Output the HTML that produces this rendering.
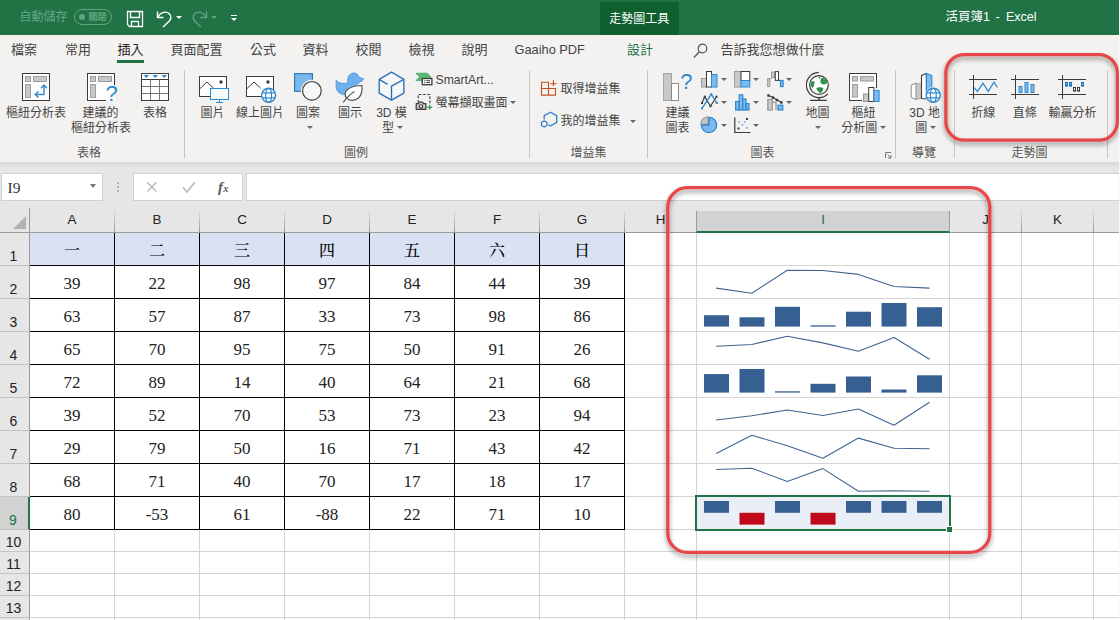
<!DOCTYPE html><html lang="zh-Hant"><head><meta charset="utf-8"><title>Excel</title><style>
*{box-sizing:border-box;margin:0;padding:0}
html,body{width:1120px;height:620px;overflow:hidden;background:#fff}
body{position:relative;font-family:"Liberation Sans","Noto Sans CJK TC",sans-serif;font-size:12px;color:#444}
.abs{position:absolute}
#title{position:absolute;left:0;top:0;width:1120px;height:35px;background:#217346}
#tabs{position:absolute;left:0;top:35px;width:1120px;height:29px;background:#f3f2f1}
#ribbon{position:absolute;left:0;top:64px;width:1120px;height:98px;background:#f3f2f1}
#fbar{position:absolute;left:0;top:162px;width:1120px;height:46px;background:#e6e6e6}
#grid{position:absolute;left:0;top:208px;width:1120px;height:412px;background:#fff;overflow:hidden}
.tab{position:absolute;top:42px;font-size:13px;line-height:16px;color:#444;white-space:nowrap}
.lbl{position:absolute;font-size:12px;line-height:14px;color:#444;white-space:nowrap;text-align:center}
.glbl{position:absolute;top:146px;font-size:12px;line-height:14px;color:#555;white-space:nowrap}
.vsep{position:absolute;top:70px;width:1px;height:88px;background:#c8c6c4}
.ch{position:absolute;top:0;height:24px;background:#e6e6e6;font-size:13.4px;line-height:18px;padding-top:3px;text-align:center;color:#222;font-family:"Liberation Sans",sans-serif}
.rh{position:absolute;left:0;width:30px;z-index:4;background:#e6e6e6;border-bottom:1px solid #c4c4c4;border-right:1px solid #9b9b9b;font-size:14px;text-align:center;padding-right:2px;color:#222;font-family:"Liberation Sans",sans-serif}
.hl{position:absolute;left:29px;width:1091px;height:1px;background:#d4d4d4}
.vl{position:absolute;top:24px;width:1px;height:400px;background:#d4d4d4}
.c{position:absolute;width:86px;height:34px;border:1px solid #000;text-align:center;font-family:"Liberation Serif","Noto Serif CJK SC",serif;font-size:17px;line-height:32px;padding-top:2px;color:#222}
.c.h{font-size:16px;padding-top:2px;font-weight:500;color:#000}
.c.h{background:#d9e1f2}
</style></head><body>
<div id="title">
<span class="abs" style="left:19.5px;top:9px;font-size:12px;line-height:16px;color:#62a882;white-space:nowrap">自動儲存</span>
<span class="abs" style="left:74px;top:9px;width:38px;height:16px;border:1px solid #5fa57f;border-radius:8px"></span>
<span class="abs" style="left:79px;top:14px;width:6px;height:6px;border-radius:3px;background:#5fa57f"></span>
<span class="abs" style="left:88.5px;top:10px;font-size:9px;line-height:14px;font-weight:bold;color:#62a882;white-space:nowrap">關閉</span>
<div class="abs" style="left:600px;top:2px;width:79px;height:33px;background:#10602f"></div>
<span class="abs" style="left:609.3px;top:10.5px;font-size:12px;line-height:16px;color:#fff;white-space:nowrap">走勢圖工具</span>
<span class="abs" style="left:945.5px;top:9px;font-size:12.5px;line-height:16px;color:#fff;white-space:pre">活頁簿1</span>
<span class="abs" style="left:995.5px;top:9px;font-size:12.5px;line-height:16px;color:#fff;white-space:pre">-</span>
<span class="abs" style="left:1006px;top:9px;font-size:12.5px;line-height:16px;color:#fff;white-space:pre">Excel</span>
<svg class="abs" style="left:126px;top:10px" width="18" height="18" viewBox="0 0 18 18"><path d="M1.5 1.5 H16.5 V16.5 H3.5 L1.5 14.5 Z M4.5 1.5 V7.5 H13.5 V1.5 M5.5 16.5 V11.5 H12.5 V16.5" fill="none" stroke="#fff" stroke-width="1.3"/></svg>
<svg class="abs" style="left:156px;top:10px" width="18" height="18" viewBox="0 0 18 18"><path d="M1.5 1.5 V7.5 H7.5" fill="none" stroke="#fff" stroke-width="1.4"/><path d="M1.8 7.2 C4 3.5 8 1.2 11.5 2.6 C15 4 15.8 8 13.6 10.8 L7 17" fill="none" stroke="#fff" stroke-width="1.4"/></svg>
<div class="abs" style="left:175.5px;top:16px;width:0;height:0;border-left:3px solid transparent;border-right:3px solid transparent;border-top:3px solid #fff"></div>
<svg class="abs" style="left:190px;top:10px" width="18" height="18" viewBox="0 0 18 18"><path d="M16.5 1.5 V7.5 H10.5" fill="none" stroke="#5fa57f" stroke-width="1.3"/><path d="M16.2 7.2 C14 3.5 10 1.2 6.5 2.6 C3 4 2.2 8 4.4 10.8 L11 17" fill="none" stroke="#5fa57f" stroke-width="1.3"/></svg>
<div class="abs" style="left:210.5px;top:16px;width:0;height:0;border-left:3px solid transparent;border-right:3px solid transparent;border-top:3px solid #5fa57f"></div>
<div class="abs" style="left:231px;top:15px;width:6px;height:1px;background:#fff"></div>
<div class="abs" style="left:230.5px;top:18px;width:0;height:0;border-left:3px solid transparent;border-right:3px solid transparent;border-top:3px solid #fff"></div>
</div>
<div id="tabs"></div>
<span class="tab" style="left:11px">檔案</span>
<span class="tab" style="left:65px">常用</span>
<span class="tab" style="left:117.5px;color:#222">插入</span>
<span class="tab" style="left:170.5px">頁面配置</span>
<span class="tab" style="left:250px">公式</span>
<span class="tab" style="left:302.5px">資料</span>
<span class="tab" style="left:355.5px">校閱</span>
<span class="tab" style="left:408.5px">檢視</span>
<span class="tab" style="left:461.5px">說明</span>
<span class="tab" style="left:514.5px;font-size:12.8px">Gaaiho PDF</span>
<span class="tab" style="left:627px;color:#217346">設計</span>
<div class="abs" style="left:117px;top:60px;width:27px;height:3px;background:#217346"></div>
<span class="tab" style="left:720.5px">告訴我您想做什麼</span>
<svg class="abs" style="left:692px;top:42px" width="18" height="18" viewBox="0 0 18 18"><circle cx="10.5" cy="6.5" r="4.3" fill="none" stroke="#555" stroke-width="1.2"/><path d="M7.4 9.8 L2 15.5" stroke="#555" stroke-width="1.3" fill="none"/></svg>
<div id="ribbon"></div>
<svg class="abs" style="left:22px;top:73px" width="28" height="28" viewBox="0 0 28 28"><rect x="0.5" y="0.5" width="27" height="27" fill="#fff" stroke="#3b3b3b"/><rect x="3.5" y="3.5" width="5" height="5" fill="#c8c8c8" stroke="#9d9d9d"/><rect x="11.5" y="3.5" width="13" height="5" fill="#c8c8c8" stroke="#9d9d9d"/><rect x="3.5" y="11.5" width="5" height="13" fill="#c8c8c8" stroke="#9d9d9d"/><path d="M22 12.5 V21.5 H13.5 M19 15.2 L22 12 L25 15.2 M16.5 18.5 L13.2 21.5 L16.5 24.5" fill="none" stroke="#2e8ad0" stroke-width="1.4"/></svg>
<span class="lbl" style="left:-24px;width:120px;top:106px">樞紐分析表</span>
<svg class="abs" style="left:87px;top:73px" width="32" height="32" viewBox="0 0 32 32"><rect x="0.5" y="0.5" width="27" height="27" fill="#fff" stroke="#3b3b3b"/><rect x="3.5" y="3.5" width="5" height="5" fill="#c8c8c8" stroke="#9d9d9d"/><rect x="11.5" y="3.5" width="13" height="5" fill="#c8c8c8" stroke="#9d9d9d"/><rect x="3.5" y="11.5" width="5" height="13" fill="#c8c8c8" stroke="#9d9d9d"/><rect x="19" y="12" width="13" height="20" fill="#f3f2f1"/><rect x="19" y="12" width="8.5" height="15.5" fill="#fff"/><text x="18.6" y="28.4" font-family="Liberation Sans,sans-serif" font-size="22" fill="#2e8ad0">?</text></svg>
<span class="lbl" style="left:40.5px;width:120px;top:106px">建議的</span>
<span class="lbl" style="left:41px;width:120px;top:121px">樞紐分析表</span>
<svg class="abs" style="left:141px;top:73px" width="28" height="28" viewBox="0 0 28 28"><rect x="0.5" y="0.5" width="27" height="27" fill="#fff" stroke="#3b3b3b"/><path d="M0.5 6.5 H27.5" stroke="#3b3b3b" fill="none"/><path d="M9.5 6.5 V27 M18.5 6.5 V27 M1 13.5 H27 M1 20.5 H27" stroke="#777" fill="none"/><path d="M2.5 2 H8 L5.25 5 Z M11.5 2 H17 L14.25 5 Z M20.5 2 H26 L23.25 5 Z" fill="#2e8ad0"/></svg>
<span class="lbl" style="left:95px;width:120px;top:106px">表格</span>
<span class="glbl" style="left:49px;width:80px;text-align:center">表格</span>
<div class="vsep" style="left:184px"></div>
<svg class="abs" style="left:199px;top:76px" width="32" height="28" viewBox="0 0 32 28"><rect x="0.5" y="0.5" width="27" height="20" fill="#fff" stroke="#3b3b3b"/><path d="M0.5 13 L8 6 L14.5 12" fill="none" stroke="#3b3b3b"/><circle cx="22" cy="6" r="1.7" fill="#3b3b3b"/><rect x="11.5" y="12.5" width="18" height="11" fill="#f4fbff" stroke="#2e8ad0"/><path d="M20.5 23.5 V26.5 M17 26.5 H24" stroke="#2e8ad0" fill="none"/></svg>
<span class="lbl" style="left:152.5px;width:120px;top:106px">圖片</span>
<svg class="abs" style="left:246px;top:76px" width="32" height="28" viewBox="0 0 32 28"><rect x="0.5" y="0.5" width="27" height="20" fill="#fff" stroke="#3b3b3b"/><path d="M0.5 13 L8 6 L14.5 12" fill="none" stroke="#3b3b3b"/><circle cx="22" cy="6" r="1.7" fill="#3b3b3b"/><circle cx="22.6" cy="19.3" r="7" fill="#fff" stroke="#2e8ad0" stroke-width="1.4"/><ellipse cx="22.6" cy="19.3" rx="2.94" ry="7" fill="none" stroke="#2e8ad0" stroke-width="1.2"/><path d="M16.09 16.78 H29.11 M16.09 21.82 H29.11" stroke="#2e8ad0" stroke-width="1.2" fill="none"/></svg>
<span class="lbl" style="left:200px;width:120px;top:106px">線上圖片</span>
<svg class="abs" style="left:293px;top:72px" width="32" height="30" viewBox="0 0 32 30"><rect x="1.6" y="1.7" width="17.8" height="17.6" fill="#7bb8ee" stroke="#226fb6" stroke-width="1.1"/><circle cx="18.9" cy="18.8" r="11" fill="#f3f2f1"/><circle cx="18.9" cy="18.8" r="9.3" fill="#f7f7f7" stroke="#444" stroke-width="1.2"/></svg>
<span class="lbl" style="left:248px;width:120px;top:106px">圖案</span>
<div class="abs" style="left:306.5px;top:126.0px;width:0;height:0;border-left:3px solid transparent;border-right:3px solid transparent;border-top:3px solid #666"></div>
<svg class="abs" style="left:335px;top:72px" width="30" height="32" viewBox="0 0 30 32"><path d="M1.1 8 C2.5 10.2 5 11.3 8 11.3 H13 C12.3 9.5 12.3 7.5 13 5.6 C14 2.4 16.4 0.9 18.8 0.9 C21.5 0.9 23.3 2.7 23.9 5.2 L28.6 6.7 C28 8.6 26.6 9.6 25 9.8 C24.4 11.2 23 12.3 20.8 12.6 L20 21 L8.5 22.7 C4 21.5 1.1 19 1.1 14 Z" fill="#6db1ee" stroke="#3d8ddb" stroke-width="0.7"/><path d="M26.9 13.5 C22 13.6 16 14.6 12.5 17.5 C9.5 20 9.5 24 11.6 26.1 C14.5 29.2 20 29 23.5 26 C26.5 23 27.6 18.5 26.9 13.5 Z" fill="#fff" stroke="#555" stroke-width="1.2"/><path d="M8.2 30.4 C11.5 26 14.5 22.5 19.5 19.6" stroke="#555" stroke-width="1.2" fill="none"/></svg>
<span class="lbl" style="left:290px;width:120px;top:106px">圖示</span>
<svg class="abs" style="left:378px;top:71px" width="28" height="31" viewBox="0 0 28 31"><path d="M13.5 1.2 L25.9 8.3 V22.2 L13.5 29.2 L1.2 22.2 V8.3 Z" fill="#f7f7f7" stroke="#2b70b8" stroke-width="1.35" stroke-linejoin="round"/><path d="M1.2 8.3 L9.6 13.3 M25.9 8.3 L13.5 15.1 V29.2" fill="none" stroke="#2b70b8" stroke-width="1.35"/></svg>
<span class="lbl" style="left:331.5px;width:120px;top:106px">3D 模</span>
<span class="lbl" style="left:328px;width:120px;top:121px">型</span>
<div class="abs" style="left:396.5px;top:126.0px;width:0;height:0;border-left:3px solid transparent;border-right:3px solid transparent;border-top:3px solid #666"></div>
<svg class="abs" style="left:415px;top:72px" width="18" height="14" viewBox="0 0 18 14"><path d="M0.9 1.2 H12 L16.1 4.9 L14 7 H7.2 V8.6 H0.9 L4.6 4.9 Z" fill="#5cb874" stroke="#3f9f5b" stroke-width="0.7"/><rect x="7.3" y="6.5" width="9.6" height="6.2" fill="#fff" stroke="#3b3b3b" stroke-width="1.3"/><path d="M9.2 8.7 H10.3 M11.3 8.7 H15 M9.2 10.6 H10.3 M11.3 10.6 H15" stroke="#3b3b3b" fill="none"/></svg>
<span class="lbl" style="left:435.5px;top:72.5px;text-align:left;font-size:12.2px">SmartArt...</span>
<svg class="abs" style="left:415px;top:93px" width="19" height="18" viewBox="0 0 19 18"><path d="M3.2 9.5 V1.5 H14.9 V11" fill="none" stroke="#3b3b3b" stroke-width="1.1" stroke-dasharray="2.6 1.7"/><path d="M1.2 10.6 H3.4 L4.1 9.2 H7.6 L8.3 10.6 H10.9 V16.4 H1.2 Z" fill="#c8c8c8" stroke="#3b3b3b" stroke-width="1.2" stroke-linejoin="round"/><circle cx="6" cy="13.4" r="1.7" fill="#ececec" stroke="#3b3b3b" stroke-width="1.1"/><path d="M14.7 11.8 V16.8 M12.2 14.3 H17.2" stroke="#2f9b4c" stroke-width="1.3" fill="none"/></svg>
<span class="lbl" style="left:435.5px;top:95.5px;text-align:left">螢幕擷取畫面</span>
<div class="abs" style="left:509.5px;top:101.0px;width:0;height:0;border-left:3px solid transparent;border-right:3px solid transparent;border-top:3px solid #666"></div>
<span class="glbl" style="left:316px;width:80px;text-align:center">圖例</span>
<div class="vsep" style="left:529px"></div>
<svg class="abs" style="left:540px;top:80px" width="18" height="17" viewBox="0 0 18 17"><path d="M1.5 2.2 H8.5 V15.1 H1.5 Z M8.5 8.5 H15.5 V15.1 H8.5 M1.5 8.5 H8.5 M13.4 0.3 V6.1 M10.5 3.7 H16.7" fill="none" stroke="#c8501e" stroke-width="1.15"/></svg>
<span class="lbl" style="left:560.5px;top:81.5px;text-align:left">取得增益集</span>
<svg class="abs" style="left:540px;top:111px" width="18" height="18" viewBox="0 0 18 18"><path d="M4.2 8.6 V4.6 L10.5 1.2 L16.7 4.6 V11.4 L10.5 15 L8.3 13.8" fill="none" stroke="#2e7fd0" stroke-width="1.3" stroke-linejoin="round"/><path d="M4.2 9.8 L6.9 11.35 V14.45 L4.2 16 L1.5 14.45 V11.35 Z" fill="none" stroke="#2e7fd0" stroke-width="1.3" stroke-linejoin="round"/></svg>
<span class="lbl" style="left:560.5px;top:113.5px;text-align:left">我的增益集</span>
<div class="abs" style="left:629.5px;top:119.5px;width:0;height:0;border-left:3px solid transparent;border-right:3px solid transparent;border-top:3px solid #666"></div>
<span class="glbl" style="left:548.5px;width:80px;text-align:center">增益集</span>
<div class="vsep" style="left:647px"></div>
<svg class="abs" style="left:662px;top:72px" width="32" height="30" viewBox="0 0 32 30"><rect x="1.5" y="1.5" width="8" height="27" fill="#c8c8c8" stroke="#a6a6a6"/><rect x="9.5" y="11.5" width="7" height="17" fill="#fff" stroke="#8a8a8a"/><text x="18.2" y="17" font-family="Liberation Sans,sans-serif" font-size="22" fill="#2e8ad0">?</text></svg>
<span class="lbl" style="left:617.5px;width:120px;top:106px">建議</span>
<span class="lbl" style="left:617.5px;width:120px;top:121px">圖表</span>
<svg class="abs" style="left:701px;top:71px" width="17" height="17" viewBox="0 0 17 17"><rect x="0.5" y="7.5" width="5" height="8.5" fill="#c8c8c8" stroke="#9d9d9d"/><rect x="5.5" y="0.5" width="5" height="15.5" fill="#fff" stroke="#3b3b3b"/><rect x="10.5" y="3.5" width="5.5" height="12.5" fill="#7db9ee" stroke="#2e8ad0"/></svg>
<div class="abs" style="left:720.7px;top:78.0px;width:0;height:0;border-left:3px solid transparent;border-right:3px solid transparent;border-top:3px solid #666"></div>
<svg class="abs" style="left:734px;top:71px" width="17" height="17" viewBox="0 0 17 17"><rect x="0.5" y="0.5" width="6.5" height="15.5" fill="#c8c8c8" stroke="#9d9d9d"/><rect x="7" y="0.5" width="8.8" height="9" fill="#fff" stroke="#3b3b3b"/><rect x="7" y="9.5" width="8.8" height="6.5" fill="#7db9ee" stroke="#2e8ad0"/></svg>
<div class="abs" style="left:753.4px;top:78.0px;width:0;height:0;border-left:3px solid transparent;border-right:3px solid transparent;border-top:3px solid #666"></div>
<svg class="abs" style="left:767px;top:71px" width="17" height="17" viewBox="0 0 17 17"><rect x="0.6" y="7.6" width="2.3" height="8" fill="#c8c8c8" stroke="#9d9d9d"/><path d="M2.9 7.6 H4.5" stroke="#9d9d9d" fill="none"/><rect x="4.5" y="1" width="3" height="5.6" fill="#c8c8c8" stroke="#9d9d9d"/><rect x="8.3" y="0.6" width="3.2" height="8.8" fill="#fff" stroke="#3b3b3b"/><path d="M11.5 9.4 H13.5" stroke="#3b3b3b" fill="none"/><rect x="13.5" y="9.5" width="2.6" height="6.1" fill="#7db9ee" stroke="#2e8ad0" stroke-width="1.2"/></svg>
<div class="abs" style="left:786.3px;top:78.0px;width:0;height:0;border-left:3px solid transparent;border-right:3px solid transparent;border-top:3px solid #666"></div>
<svg class="abs" style="left:700.5px;top:93px" width="18" height="17" viewBox="0 0 18 17"><path d="M1 10 L3.7 3.7 L9.5 13.2 L15.5 3.7" fill="none" stroke="#3b3b3b" stroke-width="1.2"/><path d="M1 15.4 L10.3 1.3 L15.8 10" fill="none" stroke="#2e8ad0" stroke-width="1.4"/><g fill="#3b3b3b"><rect x="0" y="9" width="2" height="2"/><rect x="2.7" y="2.7" width="2" height="2"/><rect x="8.5" y="12.2" width="2" height="2"/><rect x="14.5" y="2.7" width="2" height="2"/></g><g fill="#2e8ad0"><rect x="0" y="14.4" width="2" height="2"/><rect x="9.3" y="0.3" width="2" height="2"/><rect x="14.8" y="9" width="2" height="2"/></g></svg>
<div class="abs" style="left:720.7px;top:101.0px;width:0;height:0;border-left:3px solid transparent;border-right:3px solid transparent;border-top:3px solid #666"></div>
<svg class="abs" style="left:734.5px;top:93.5px" width="15" height="17" viewBox="0 0 15 17"><rect x="0.6" y="7.5" width="3.6" height="8.5" fill="#7db9ee" stroke="#2e8ad0" stroke-width="1.2"/><rect x="4.2" y="0.8" width="3.6" height="15.2" fill="#7db9ee" stroke="#2e8ad0" stroke-width="1.2"/><rect x="7.8" y="5" width="3.2" height="11" fill="#7db9ee" stroke="#2e8ad0" stroke-width="1.2"/><rect x="11" y="9.5" width="3" height="6.5" fill="#7db9ee" stroke="#2e8ad0" stroke-width="1.2"/></svg>
<div class="abs" style="left:753.4px;top:101.0px;width:0;height:0;border-left:3px solid transparent;border-right:3px solid transparent;border-top:3px solid #666"></div>
<svg class="abs" style="left:767px;top:93.5px" width="17" height="17" viewBox="0 0 17 17"><rect x="0.8" y="5.5" width="4.5" height="10.5" fill="#c8c8c8" stroke="#9d9d9d" stroke-width="1.3"/><path d="M5.3 8.3 H9 V16" fill="none" stroke="#9d9d9d" stroke-width="1.4"/><rect x="11" y="11.2" width="4.8" height="4.8" fill="#7db9ee" stroke="#2e8ad0" stroke-width="1.2"/><path d="M1.5 1.5 L6 3.5 L10 6 L14.5 8.5" fill="none" stroke="#3b3b3b" stroke-width="1.1"/><g fill="#3b3b3b"><rect x="0.3" y="0.3" width="2.4" height="2.4"/><rect x="4.8" y="2.4" width="2.4" height="2.4"/><rect x="8.8" y="4.8" width="2.4" height="2.4"/><rect x="13.2" y="7.3" width="2.4" height="2.4"/></g></svg>
<div class="abs" style="left:786.3px;top:101.0px;width:0;height:0;border-left:3px solid transparent;border-right:3px solid transparent;border-top:3px solid #666"></div>
<svg class="abs" style="left:700px;top:115.5px" width="18" height="18" viewBox="0 0 18 18"><circle cx="9" cy="9" r="7.6" fill="#7db9ee" stroke="#2e8ad0" stroke-width="1.4"/><path d="M8 8 V0.8 A7.4 7.4 0 0 0 0.8 8 Z" fill="#c8c8c8" stroke="#9d9d9d" stroke-width="1.2"/><path d="M9 1.5 V9 H1.5" fill="none" stroke="#2e8ad0" stroke-width="1.3"/></svg>
<div class="abs" style="left:720.7px;top:124.0px;width:0;height:0;border-left:3px solid transparent;border-right:3px solid transparent;border-top:3px solid #666"></div>
<svg class="abs" style="left:734px;top:117px" width="17" height="17" viewBox="0 0 17 17"><path d="M0.8 0.5 V15.5 H16.5" fill="none" stroke="#3b3b3b" stroke-width="1.2"/><g fill="#3b3b3b"><rect x="12" y="1" width="2" height="2"/><rect x="3.5" y="10.5" width="2" height="2"/></g><g fill="#7db9ee"><rect x="4" y="4" width="1.8" height="1.8"/><rect x="7.5" y="7" width="1.8" height="1.8"/><rect x="12.2" y="10" width="1.8" height="1.8"/><rect x="10" y="4.2" width="1.6" height="1.6"/></g></svg>
<div class="abs" style="left:753.4px;top:124.0px;width:0;height:0;border-left:3px solid transparent;border-right:3px solid transparent;border-top:3px solid #666"></div>
<svg class="abs" style="left:806px;top:70px" width="26" height="34" viewBox="0 0 26 34"><path d="M12.8 2.4 A12.6 12.6 0 1 0 21.9 23.9" fill="none" stroke="#3b3b3b" stroke-width="1.2"/><circle cx="13" cy="15" r="9.3" fill="#fff" stroke="#3b3b3b" stroke-width="1.2"/><path d="M4.6 12.6 C5.6 11.2 7.6 10.8 8.8 11.4 C8.6 13 7.8 14 8.2 15.4 C7.4 16.4 7.4 17.4 6.4 18 C4.8 16.8 4.2 14.6 4.6 12.6 Z M12.6 6.6 H14.2 L14.4 8.4 L12.8 8.6 Z M15.2 8.2 C17.6 7.4 20.2 9.2 21.2 12.2 C20.6 13.8 19 14.8 17.2 14.4 C15.4 14.2 14 12.6 14.4 10.6 C14.6 9.6 14.8 8.8 15.2 8.2 Z M10.2 18.6 C11.4 17.2 15.6 16.8 17.2 18 C17.4 20.2 16.2 22.4 14.4 23.2 C12.6 22.2 10.8 20.4 10.2 18.6 Z" fill="#2f9147"/><path d="M13 27.6 V30.3 M4 30.3 H20.8" stroke="#3b3b3b" stroke-width="1.3" fill="none"/></svg>
<span class="lbl" style="left:757.6px;width:120px;top:106px">地圖</span>
<div class="abs" style="left:815px;top:126.0px;width:0;height:0;border-left:3px solid transparent;border-right:3px solid transparent;border-top:3px solid #666"></div>
<svg class="abs" style="left:849px;top:73px" width="31" height="30" viewBox="0 0 31 30"><rect x="0.5" y="0.5" width="27" height="27" fill="#fff" stroke="#3b3b3b"/><rect x="3.5" y="3.5" width="5" height="4.5" fill="#c8c8c8" stroke="#9d9d9d"/><rect x="11.5" y="3.5" width="13" height="4.5" fill="#c8c8c8" stroke="#9d9d9d"/><rect x="3.5" y="11.5" width="5" height="12.5" fill="#c8c8c8" stroke="#9d9d9d"/><rect x="13" y="15" width="14.5" height="12.4" fill="#fff"/><rect x="13" y="27.2" width="18" height="2.8" fill="#f3f2f1"/><rect x="27.2" y="15" width="4" height="13" fill="#f3f2f1"/><rect x="14.5" y="21" width="5.2" height="7.5" fill="#c8c8c8" stroke="#9d9d9d"/><rect x="19.7" y="14.5" width="5.2" height="14" fill="#fff" stroke="#3b3b3b"/><rect x="24.9" y="17.5" width="5.2" height="11" fill="#7db9ee" stroke="#2e8ad0"/></svg>
<span class="lbl" style="left:803.6px;width:120px;top:106px">樞紐</span>
<span class="lbl" style="left:799.3px;width:120px;top:121px">分析圖</span>
<div class="abs" style="left:879.6px;top:126.0px;width:0;height:0;border-left:3px solid transparent;border-right:3px solid transparent;border-top:3px solid #666"></div>
<svg class="abs" style="left:885px;top:152px" width="7" height="7" viewBox="0 0 7 7"><path d="M0.5 6 V0.5 H6 M2.5 2.5 L6 6 M6 3 V6 H3" fill="none" stroke="#777" stroke-width="1"/></svg>
<span class="glbl" style="left:722.5px;width:80px;text-align:center">圖表</span>
<div class="vsep" style="left:895px"></div>
<svg class="abs" style="left:910px;top:71px" width="34" height="34" viewBox="0 0 34 34"><path d="M1.2 14.2 L6.1 12 V28.4 L1.2 26.5 Z" fill="#fff" stroke="#8a8a8a" stroke-width="1" stroke-linejoin="round"/><path d="M6.1 12 L11.5 13.5 V27.5 L6.1 28.4 Z" fill="#c8c8c8" stroke="#9d9d9d" stroke-width="0.8" stroke-linejoin="round"/><path d="M11.5 4.6 L16.4 2.4 V28 L11.5 27.5 Z" fill="#fff" stroke="#3b3b3b" stroke-width="1.1" stroke-linejoin="round"/><path d="M16.4 2.4 L21.8 4.5 V20 L16.4 27 Z" fill="#7db9ee" stroke="#2e8ad0" stroke-width="1.1" stroke-linejoin="round"/><circle cx="23.3" cy="24.3" r="8.2" fill="#f3f2f1"/><circle cx="23.3" cy="24.3" r="7" fill="#fff" stroke="#2e8ad0" stroke-width="1.4"/><ellipse cx="23.3" cy="24.3" rx="2.94" ry="7" fill="none" stroke="#2e8ad0" stroke-width="1.2"/><path d="M16.79 21.78 H29.81 M16.79 26.82 H29.81" stroke="#2e8ad0" stroke-width="1.2" fill="none"/></svg>
<span class="lbl" style="left:864.6px;width:120px;top:106px">3D 地</span>
<span class="lbl" style="left:861.3px;width:120px;top:121px">圖</span>
<div class="abs" style="left:929.7px;top:126.0px;width:0;height:0;border-left:3px solid transparent;border-right:3px solid transparent;border-top:3px solid #666"></div>
<span class="glbl" style="left:884px;width:80px;text-align:center">導覽</span>
<div class="vsep" style="left:953.5px"></div>
<svg class="abs" style="left:968.5px;top:75px" width="29" height="24" viewBox="0 0 29 24"><path d="M4.5 0 V24 M0 4.5 H28 M0 19.5 H28" stroke="#3b3b3b" stroke-width="1" fill="none"/><path d="M5 12.6 L8.5 16.4 L14 8.2 L19.2 16.4 L25 7.2 L28.4 12.5" fill="none" stroke="#2e8ad0" stroke-width="1.3"/></svg>
<span class="lbl" style="left:923.2px;width:120px;top:106px">折線</span>
<svg class="abs" style="left:1011px;top:75px" width="29" height="24" viewBox="0 0 29 24"><path d="M4.5 0 V24 M0 4.5 H28 M0 19.5 H28" stroke="#3b3b3b" stroke-width="1" fill="none"/><rect x="8" y="11.5" width="3" height="6" fill="#7db9ee" stroke="#2e8ad0"/><rect x="14" y="7.5" width="3" height="10" fill="#7db9ee" stroke="#2e8ad0"/><rect x="20" y="9.5" width="3" height="8" fill="#7db9ee" stroke="#2e8ad0"/></svg>
<span class="lbl" style="left:964.8px;width:120px;top:106px">直條</span>
<svg class="abs" style="left:1058px;top:75px" width="29" height="24" viewBox="0 0 29 24"><path d="M4.5 0 V24 M0 4.5 H28 M0 19.5 H28" stroke="#3b3b3b" stroke-width="1" fill="none"/><rect x="7.5" y="7.5" width="2" height="3.6" fill="#7db9ee" stroke="#1f6fb5"/><rect x="11.5" y="7.5" width="2" height="3.6" fill="#7db9ee" stroke="#1f6fb5"/><rect x="15.5" y="12.5" width="2" height="3.6" fill="#fff" stroke="#3b3b3b"/><rect x="19.5" y="12.5" width="2" height="3.6" fill="#fff" stroke="#3b3b3b"/><rect x="23.5" y="7.5" width="2" height="3.6" fill="#7db9ee" stroke="#1f6fb5"/></svg>
<span class="lbl" style="left:1012.4000000000001px;width:120px;top:106px">輸贏分析</span>
<span class="glbl" style="left:989.5px;width:80px;text-align:center">走勢圖</span>
<div class="vsep" style="left:1106.5px"></div>
<div id="fbar">
<div class="abs" style="left:0;top:0;width:1120px;height:6px;background:linear-gradient(#dadada,#e6e6e6)"></div>
<div class="abs" style="left:1px;top:11px;width:102px;height:28px;background:#fff;border:1px solid #d0d0d0"></div>
<span class="abs" style="left:7.5px;top:17px;font-family:'Liberation Serif',serif;font-size:15.5px;line-height:18px;color:#333">I9</span>
<div class="abs" style="left:90px;top:22px;width:0;height:0;border-left:3.5px solid transparent;border-right:3.5px solid transparent;border-top:4px solid #777"></div>
<div class="abs" style="left:117px;top:20px;width:2px;height:2px;background:#b0b0b0"></div>
<div class="abs" style="left:117px;top:24px;width:2px;height:2px;background:#b0b0b0"></div>
<div class="abs" style="left:117px;top:28px;width:2px;height:2px;background:#b0b0b0"></div>
<div class="abs" style="left:133px;top:11px;width:110px;height:28px;background:#fff;border:1px solid #d0d0d0"></div>
<div class="abs" style="left:246px;top:11px;width:874px;height:28px;background:#fff;border:1px solid #d0d0d0;border-right:none"></div>
<svg class="abs" style="left:134px;top:11px" width="109" height="27" viewBox="0 0 109 27"><path d="M13.3 9.5 L22.3 18.5 M22.3 9.5 L13.3 18.5" stroke="#b8b8b8" stroke-width="1.4" fill="none"/><path d="M49 14.5 L53 19 L60.5 9.5" stroke="#b8b8b8" stroke-width="1.7" fill="none"/><text x="84" y="19" font-family="Liberation Serif,serif" font-style="italic" font-weight="bold" font-size="15" fill="#5a5a5a">f</text><text x="89.2" y="19" font-family="Liberation Serif,serif" font-style="italic" font-weight="bold" font-size="10.5" fill="#5a5a5a">x</text></svg>
</div>
<div id="grid">
<div class="hl" style="top:57px"></div>
<div class="hl" style="top:90px"></div>
<div class="hl" style="top:123px"></div>
<div class="hl" style="top:156px"></div>
<div class="hl" style="top:189px"></div>
<div class="hl" style="top:222px"></div>
<div class="hl" style="top:255px"></div>
<div class="hl" style="top:288px"></div>
<div class="hl" style="top:321px"></div>
<div class="hl" style="top:343px"></div>
<div class="hl" style="top:365px"></div>
<div class="hl" style="top:387px"></div>
<div class="hl" style="top:409px"></div>
<div class="hl" style="top:431px"></div>
<div class="vl" style="left:114px"></div>
<div class="vl" style="left:199px"></div>
<div class="vl" style="left:284px"></div>
<div class="vl" style="left:369px"></div>
<div class="vl" style="left:454px"></div>
<div class="vl" style="left:539px"></div>
<div class="vl" style="left:624px"></div>
<div class="vl" style="left:696px"></div>
<div class="vl" style="left:949px"></div>
<div class="vl" style="left:1021px"></div>
<div class="vl" style="left:1093px"></div>
<div class="vl" style="left:1130px"></div>
<div class="abs" style="left:0;top:0;width:1120px;height:24px;background:#e6e6e6"></div>
<div class="abs" style="left:0;top:0;width:30px;height:24px;background:#e6e6e6;border-right:1px solid #9b9b9b;z-index:4"></div>
<div class="abs" style="left:13px;top:8px;width:0;height:0;border-left:13px solid transparent;border-bottom:13px solid #b2b2b2;z-index:5"></div>
<div class="abs" style="left:0;top:24px;width:1120px;height:1px;background:#9b9b9b;z-index:5"></div>
<div class="ch" style="left:30px;width:84px">A</div>
<div class="abs" style="left:114px;top:0;width:1px;height:24px;background:linear-gradient(rgba(155,155,155,0),rgba(155,155,155,1))"></div>
<div class="ch" style="left:115px;width:84px">B</div>
<div class="abs" style="left:199px;top:0;width:1px;height:24px;background:linear-gradient(rgba(155,155,155,0),rgba(155,155,155,1))"></div>
<div class="ch" style="left:200px;width:84px">C</div>
<div class="abs" style="left:284px;top:0;width:1px;height:24px;background:linear-gradient(rgba(155,155,155,0),rgba(155,155,155,1))"></div>
<div class="ch" style="left:285px;width:84px">D</div>
<div class="abs" style="left:369px;top:0;width:1px;height:24px;background:linear-gradient(rgba(155,155,155,0),rgba(155,155,155,1))"></div>
<div class="ch" style="left:370px;width:84px">E</div>
<div class="abs" style="left:454px;top:0;width:1px;height:24px;background:linear-gradient(rgba(155,155,155,0),rgba(155,155,155,1))"></div>
<div class="ch" style="left:455px;width:84px">F</div>
<div class="abs" style="left:539px;top:0;width:1px;height:24px;background:linear-gradient(rgba(155,155,155,0),rgba(155,155,155,1))"></div>
<div class="ch" style="left:540px;width:84px">G</div>
<div class="abs" style="left:624px;top:0;width:1px;height:24px;background:linear-gradient(rgba(155,155,155,0),rgba(155,155,155,1))"></div>
<div class="ch" style="left:625px;width:71px">H</div>
<div class="abs" style="left:696px;top:0;width:1px;height:24px;background:linear-gradient(rgba(155,155,155,0),rgba(155,155,155,1))"></div>
<div class="ch" style="left:697px;width:252px">I</div>
<div class="abs" style="left:949px;top:0;width:1px;height:24px;background:linear-gradient(rgba(155,155,155,0),rgba(155,155,155,1))"></div>
<div class="abs" style="left:696px;top:3px;width:254px;height:22px;background:#d2d2d2;border-left:1px solid #9b9b9b;border-right:1px solid #9b9b9b;border-bottom:2px solid #217346;z-index:6;font-size:13.4px;line-height:18px;padding-top:0px;text-align:center;color:#217346;font-family:Liberation Sans,sans-serif">I</div>
<div class="ch" style="left:950px;width:71px">J</div>
<div class="abs" style="left:1021px;top:0;width:1px;height:24px;background:linear-gradient(rgba(155,155,155,0),rgba(155,155,155,1))"></div>
<div class="ch" style="left:1022px;width:71px">K</div>
<div class="abs" style="left:1093px;top:0;width:1px;height:24px;background:linear-gradient(rgba(155,155,155,0),rgba(155,155,155,1))"></div>
<div class="ch" style="left:1094px;width:36px"></div>
<div class="abs" style="left:1130px;top:0;width:1px;height:24px;background:linear-gradient(rgba(155,155,155,0),rgba(155,155,155,1))"></div>
<div class="rh" style="top:25px;height:33px;padding-top:15.4px;line-height:16px">1</div>
<div class="rh" style="top:58px;height:33px;padding-top:15.4px;line-height:16px">2</div>
<div class="rh" style="top:91px;height:33px;padding-top:15.4px;line-height:16px">3</div>
<div class="rh" style="top:124px;height:33px;padding-top:15.4px;line-height:16px">4</div>
<div class="rh" style="top:157px;height:33px;padding-top:15.4px;line-height:16px">5</div>
<div class="rh" style="top:190px;height:33px;padding-top:15.4px;line-height:16px">6</div>
<div class="rh" style="top:223px;height:33px;padding-top:15.4px;line-height:16px">7</div>
<div class="rh" style="top:256px;height:33px;padding-top:15.4px;line-height:16px">8</div>
<div class="rh" style="top:289px;height:33px;padding-top:15.4px;line-height:16px;background:#d2d2d2;color:#217346;border-right:2px solid #217346">9</div>
<div class="rh" style="top:322px;height:22px;padding-top:4.4px;line-height:16px">10</div>
<div class="rh" style="top:344px;height:22px;padding-top:4.4px;line-height:16px">11</div>
<div class="rh" style="top:366px;height:22px;padding-top:4.4px;line-height:16px">12</div>
<div class="rh" style="top:388px;height:22px;padding-top:4.4px;line-height:16px">13</div>
<div class="rh" style="top:410px;height:22px;padding-top:4.4px;line-height:16px">14</div>
<div class="c h" style="left:29px;top:24px">一</div>
<div class="c h" style="left:114px;top:24px">二</div>
<div class="c h" style="left:199px;top:24px">三</div>
<div class="c h" style="left:284px;top:24px">四</div>
<div class="c h" style="left:369px;top:24px">五</div>
<div class="c h" style="left:454px;top:24px">六</div>
<div class="c h" style="left:539px;top:24px">日</div>
<div class="c" style="left:29px;top:57px">39</div>
<div class="c" style="left:114px;top:57px">22</div>
<div class="c" style="left:199px;top:57px">98</div>
<div class="c" style="left:284px;top:57px">97</div>
<div class="c" style="left:369px;top:57px">84</div>
<div class="c" style="left:454px;top:57px">44</div>
<div class="c" style="left:539px;top:57px">39</div>
<div class="c" style="left:29px;top:90px">63</div>
<div class="c" style="left:114px;top:90px">57</div>
<div class="c" style="left:199px;top:90px">87</div>
<div class="c" style="left:284px;top:90px">33</div>
<div class="c" style="left:369px;top:90px">73</div>
<div class="c" style="left:454px;top:90px">98</div>
<div class="c" style="left:539px;top:90px">86</div>
<div class="c" style="left:29px;top:123px">65</div>
<div class="c" style="left:114px;top:123px">70</div>
<div class="c" style="left:199px;top:123px">95</div>
<div class="c" style="left:284px;top:123px">75</div>
<div class="c" style="left:369px;top:123px">50</div>
<div class="c" style="left:454px;top:123px">91</div>
<div class="c" style="left:539px;top:123px">26</div>
<div class="c" style="left:29px;top:156px">72</div>
<div class="c" style="left:114px;top:156px">89</div>
<div class="c" style="left:199px;top:156px">14</div>
<div class="c" style="left:284px;top:156px">40</div>
<div class="c" style="left:369px;top:156px">64</div>
<div class="c" style="left:454px;top:156px">21</div>
<div class="c" style="left:539px;top:156px">68</div>
<div class="c" style="left:29px;top:189px">39</div>
<div class="c" style="left:114px;top:189px">52</div>
<div class="c" style="left:199px;top:189px">70</div>
<div class="c" style="left:284px;top:189px">53</div>
<div class="c" style="left:369px;top:189px">73</div>
<div class="c" style="left:454px;top:189px">23</div>
<div class="c" style="left:539px;top:189px">94</div>
<div class="c" style="left:29px;top:222px">29</div>
<div class="c" style="left:114px;top:222px">79</div>
<div class="c" style="left:199px;top:222px">50</div>
<div class="c" style="left:284px;top:222px">16</div>
<div class="c" style="left:369px;top:222px">71</div>
<div class="c" style="left:454px;top:222px">43</div>
<div class="c" style="left:539px;top:222px">42</div>
<div class="c" style="left:29px;top:255px">68</div>
<div class="c" style="left:114px;top:255px">71</div>
<div class="c" style="left:199px;top:255px">40</div>
<div class="c" style="left:284px;top:255px">70</div>
<div class="c" style="left:369px;top:255px">17</div>
<div class="c" style="left:454px;top:255px">18</div>
<div class="c" style="left:539px;top:255px">17</div>
<div class="c" style="left:29px;top:288px">80</div>
<div class="c" style="left:114px;top:288px">-53</div>
<div class="c" style="left:199px;top:288px">61</div>
<div class="c" style="left:284px;top:288px">-88</div>
<div class="c" style="left:369px;top:288px">22</div>
<div class="c" style="left:454px;top:288px">71</div>
<div class="c" style="left:539px;top:288px">10</div>
<div class="abs" style="left:695px;top:287px;width:256px;height:36px;border:2px solid #217346;background:#e9eef7"></div>
<div class="abs" style="left:946px;top:318px;width:7px;height:7px;background:#217346;border:1px solid #fff"></div>
<svg class="abs" style="left:0;top:0" width="1120" height="412" viewBox="0 0 1120 412"><polyline points="716.2,80.1 751.8,85.2 787.3,62.2 822.9,62.5 858.4,66.4 894.0,78.5 929.5,80.1" fill="none" stroke="#41648f" stroke-width="1.1" stroke-linejoin="round"/><rect x="704.0" y="107.2" width="25" height="11.4" fill="#376092"/><rect x="739.5" y="109.3" width="25" height="9.3" fill="#376092"/><rect x="775.0" y="98.8" width="25" height="19.8" fill="#376092"/><rect x="810.5" y="117.3" width="25" height="1.3" fill="#376092"/><rect x="846.0" y="103.7" width="25" height="14.9" fill="#376092"/><rect x="881.5" y="95.0" width="25" height="23.6" fill="#376092"/><rect x="917.0" y="99.2" width="25" height="19.4" fill="#376092"/><polyline points="716.2,138.2 751.8,136.5 787.3,128.2 822.9,134.9 858.4,143.2 894.0,129.5 929.5,151.2" fill="none" stroke="#41648f" stroke-width="1.1" stroke-linejoin="round"/><rect x="704.0" y="166.1" width="25" height="18.5" fill="#376092"/><rect x="739.5" y="161.0" width="25" height="23.6" fill="#376092"/><rect x="775.0" y="183.3" width="25" height="1.3" fill="#376092"/><rect x="810.5" y="175.8" width="25" height="8.8" fill="#376092"/><rect x="846.0" y="168.5" width="25" height="16.1" fill="#376092"/><rect x="881.5" y="181.5" width="25" height="3.1" fill="#376092"/><rect x="917.0" y="167.3" width="25" height="17.3" fill="#376092"/><polyline points="716.2,212.0 751.8,207.8 787.3,202.0 822.9,207.5 858.4,201.0 894.0,217.2 929.5,194.2" fill="none" stroke="#41648f" stroke-width="1.1" stroke-linejoin="round"/><polyline points="716.2,245.5 751.8,227.2 787.3,237.8 822.9,250.2 858.4,230.1 894.0,240.3 929.5,240.7" fill="none" stroke="#41648f" stroke-width="1.1" stroke-linejoin="round"/><polyline points="716.2,261.5 751.8,260.2 787.3,273.4 822.9,260.6 858.4,283.2 894.0,282.8 929.5,283.2" fill="none" stroke="#41648f" stroke-width="1.1" stroke-linejoin="round"/><rect x="704.0" y="293" width="25" height="11.8" fill="#376092"/><rect x="739.5" y="304.8" width="25" height="11.8" fill="#c0091b"/><rect x="775.0" y="293" width="25" height="11.8" fill="#376092"/><rect x="810.5" y="304.8" width="25" height="11.8" fill="#c0091b"/><rect x="846.0" y="293" width="25" height="11.8" fill="#376092"/><rect x="881.5" y="293" width="25" height="11.8" fill="#376092"/><rect x="917.0" y="293" width="25" height="11.8" fill="#376092"/></svg>
</div>
<svg class="abs" style="left:0;top:0;pointer-events:none;z-index:20" width="1120" height="620" viewBox="0 0 1120 620"><defs><filter id="sh" x="-10%" y="-10%" width="120%" height="130%"><feGaussianBlur in="SourceAlpha" stdDeviation="2.4"/><feOffset dx="0" dy="2.5" result="o"/><feComponentTransfer><feFuncA type="linear" slope="0.42"/></feComponentTransfer><feMerge><feMergeNode/><feMergeNode in="SourceGraphic"/></feMerge></filter></defs><g fill="none" stroke="#e8474a" stroke-width="3.3" filter="url(#sh)"><rect x="945.85" y="54.6" width="171.5" height="85.6" rx="18.4" ry="18.4"/><rect x="667.8" y="187.6" width="322" height="364.8" rx="19.5" ry="19.5"/></g></svg>
<div class="abs" style="left:1119px;top:0;width:1px;height:620px;background:#f6fbf8;z-index:30"></div>
</body></html>
